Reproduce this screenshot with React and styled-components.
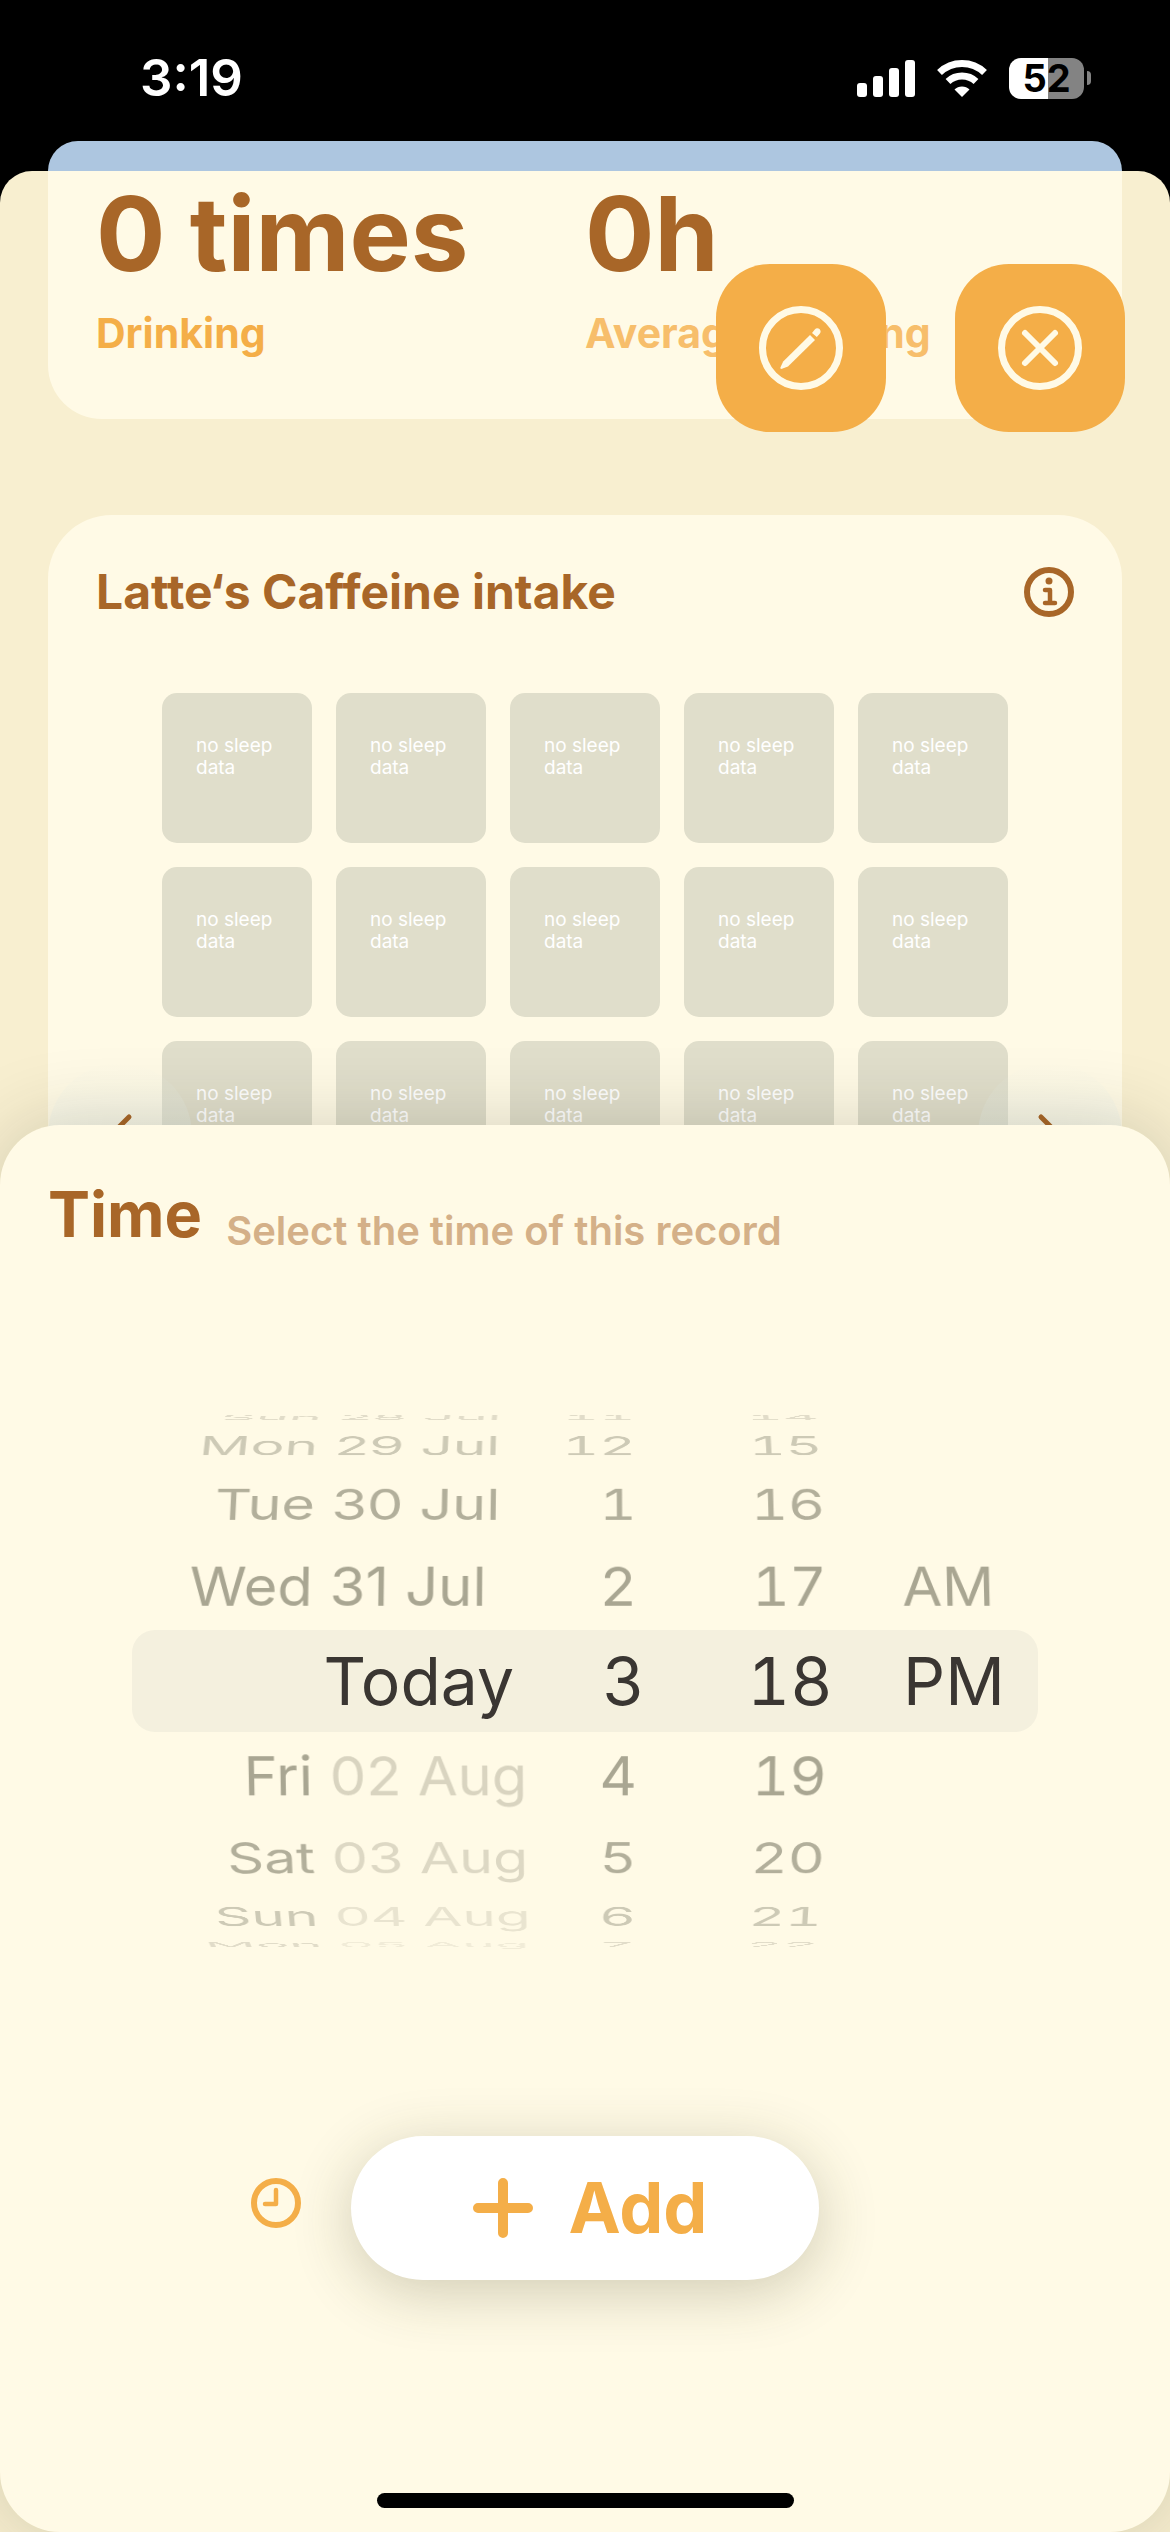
import styled, { createGlobalStyle } from 'styled-components'

export default function App() {
    return <Screen>
        <GlobalStyle />
        <StatusBar>
            <Clock>3:19</Clock>
            <StatusIcons>
                <SignalIcon />
                <WifiIcon />
                <Battery><Level>52</Level></Battery>
            </StatusIcons>
        </StatusBar>
        <BackCard />
        <Page>
            <StatsCard>
                {stats.map(value => {
                    return <div key={value.label}>
                        <StatValue>{value.value}</StatValue>
                        <StatLabel $faded={value.faded}>{value.label}</StatLabel>
                    </div>
                })}
            </StatsCard>
            <IntakeCard>
                <CardHeader>
                    <CardTitle>Latte‘s Caffeine intake</CardTitle>
                    <button aria-label='About caffeine intake'><InfoIcon /></button>
                </CardHeader>
                <Tiles>
                    {Array.from({ length: 15 }, (_, i) => <Tile key={i}>no sleep<br />data</Tile>)}
                </Tiles>
                <PrevButton aria-label='Previous'><Chevron d='M26 6 8 24l18 18' /></PrevButton>
                <NextButton aria-label='Next'><Chevron d='M8 6l18 18L8 42' /></NextButton>
            </IntakeCard>
        </Page>
        <FloatingActions>
            <ActionButton aria-label='Edit'><EditIcon /></ActionButton>
            <ActionButton aria-label='Close'><CloseIcon /></ActionButton>
        </FloatingActions>
        <Sheet>
            <SheetHeader>
                <SheetTitle>Time</SheetTitle>
                <SheetHint>Select the time of this record</SheetHint>
            </SheetHeader>
            <Picker>
                <SelectedBar />
                <Wheels>
                    <Wheel role='listbox' aria-label='Date'>
                        {dates.map(([day, date, future], i) => {
                            const row = i - 4
                            if (row === 0) return <Option key={day} $row={0} $align='flex-end' role='option' aria-selected>{day}</Option>
                            return <Option key={day + date} $row={row} role='option' aria-selected={false}>
                                <Weekday>{day}</Weekday>
                                <MonthDay $future={future}>{date}</MonthDay>
                            </Option>
                        })}
                    </Wheel>
                    <NumberWheel role='listbox' aria-label='Hour'>
                        {hours.map((value, i) => <Option key={value} $row={i - 4} $align='flex-end' $inset={i === 4 ? 0 : 8} role='option' aria-selected={i === 4}>{value}</Option>)}
                    </NumberWheel>
                    <NumberWheel $lead={32} role='listbox' aria-label='Minute'>
                        {minutes.map((value, i) => <Option key={value} $row={i - 4} $align='center' role='option' aria-selected={i === 4}>{value}</Option>)}
                    </NumberWheel>
                    <Wheel role='listbox' aria-label='AM or PM'>
                        {['AM', 'PM'].map((value, i) => <Option key={value} $row={i - 1} role='option' aria-selected={i === 1}>{value}</Option>)}
                    </Wheel>
                </Wheels>
            </Picker>
            <SheetActions>
                <NowButton aria-label='Use current time'><ClockIcon /></NowButton>
                <AddButton><PlusIcon />Add</AddButton>
            </SheetActions>
            <HomeIndicator />
        </Sheet>
    </Screen>
}

const stats = [
    { value: '0 times', label: 'Drinking' },
    { value: '0h', label: 'Average Drinking', faded: true }
]

const dates = [
    ['Sun', '28 Jul'], ['Mon', '29 Jul'], ['Tue', '30 Jul'], ['Wed', '31 Jul'],
    ['Today'],
    ['Fri', '02 Aug', true], ['Sat', '03 Aug', true], ['Sun', '04 Aug', true], ['Mon', '05 Aug', true]
]
const hours = [11, 12, 1, 2, 3, 4, 5, 6, 7]
const minutes = [14, 15, 16, 17, 18, 19, 20, 21, 22]

// picker drum: rows sit 20deg apart on a cylinder
const RADIUS = 278
const STEP = 20
const fade = [1, 0.9, 0.8, 0.52, 0.32]

const SignalIcon = () => <svg width='58' height='38' fill='#fff' aria-hidden='true'>
    <rect y='24' width='10' height='14' rx='3' />
    <rect x='16' y='17' width='10' height='21' rx='3' />
    <rect x='32' y='9' width='10' height='29' rx='3' />
    <rect x='48' y='1' width='10' height='37' rx='3' />
</svg>

const WifiIcon = () => <svg width='50' height='38' viewBox='0 0 50 38' fill='none' stroke='#fff' strokeWidth='7' aria-hidden='true'>
    <path d='M2.500 13.500C8.500 7.800 16.400 4.500 25 4.500s16.500 3.300 22.500 9' />
    <path d='M11 22.500c3.700-3.500 8.600-5.500 14-5.500s10.300 2 14 5.500' />
    <path d='M17.500 30.500c2-1.900 4.600-3 7.500-3s5.500 1.100 7.500 3L25 38z' fill='#fff' stroke='none' />
</svg>

const InfoIcon = () => <svg width='50' height='50' viewBox='0 0 50 50' fill='none' stroke='#a86628' aria-hidden='true'>
    <circle cx='25' cy='25' r='22' strokeWidth='6' />
    <circle cx='25' cy='14' r='3.500' fill='#a86628' stroke='none' />
    <path d='M21 23h5v13M21 36h10' strokeWidth='4.500' strokeLinecap='round' strokeLinejoin='round' />
</svg>

const EditIcon = () => <svg width='84' height='84' viewBox='0 0 84 84' fill='#fffae6' aria-hidden='true'>
    <circle cx='42' cy='42' r='38.500' fill='none' stroke='#fffae6' strokeWidth='7' />
    <path d='M51 29l5 5-27 26.500-6 2.300c-1.200.4-2-.4-1.500-1.500l2.700-5.800z' />
    <path d='M53 27l2.800-3.500c1.300-1.700 3.300-1.800 4.700-.4s1.600 3.400 0 4.900L57.800 31z' />
</svg>

const CloseIcon = () => <svg width='84' height='84' viewBox='0 0 84 84' fill='none' stroke='#fffae6' aria-hidden='true'>
    <circle cx='42' cy='42' r='38.500' strokeWidth='7' />
    <path d='M27 27l30 30M57 27L27 57' strokeWidth='6' strokeLinecap='round' />
</svg>

const Chevron = ({ d }) => <svg width='34' height='48' viewBox='0 0 34 48' fill='none' stroke='#a86628' strokeWidth='5' strokeLinecap='round' strokeLinejoin='round' aria-hidden='true'>
    <path d={d} />
</svg>

const ClockIcon = () => <svg width='50' height='50' viewBox='0 0 50 50' fill='none' stroke='#f4ae48' aria-hidden='true'>
    <circle cx='25' cy='25' r='22' strokeWidth='6' />
    <path d='M25 12v14H14' strokeWidth='4.500' strokeLinecap='round' strokeLinejoin='round' />
</svg>

const PlusIcon = () => <svg width='60' height='60' viewBox='0 0 60 60' stroke='#f4ae48' strokeWidth='10' strokeLinecap='round' aria-hidden='true'>
    <path d='M30 5v50M5 30h50' />
</svg>

const GlobalStyle = createGlobalStyle`
    * { box-sizing: border-box; }
    body {
        margin: 0;
        background: #000;
        font-family: Inter, "Liberation Sans", sans-serif;
    }
    h1, h2, p { margin: 0; }
    button {
        padding: 0;
        border: 0;
        background: none;
        font: inherit;
        color: inherit;
    }
    svg { display: block; flex: none; }
`;

const Screen = styled.div`
    position: relative;
    display: flex;
    flex-direction: column;
    height: 100vh;
    overflow: hidden;
    background: #000;
`;

const StatusBar = styled.header`
    display: flex;
    justify-content: space-between;
    align-items: center;
    padding: 46px 79px 31px 140px;
    color: #fff;
`;

const Clock = styled.div`
    font-size: 51px;
    line-height: 64px;
    font-weight: 600;
`;

const StatusIcons = styled.div`
    display: flex;
    align-items: center;
    gap: 22px;
`;

const Battery = styled.div`
    display: flex;
    align-items: center;
    gap: 3px;

    &::after {
        content: '';
        width: 4px;
        height: 14px;
        border-radius: 0 4px 4px 0;
        background: #838383;
    }
`;

const Level = styled.div`
    width: 75px;
    border-radius: 12px;
    background: linear-gradient(to right, #fff 52%, #838383 52%);
    color: #000;
    font-size: 38px;
    line-height: 41px;
    font-weight: 700;
    text-align: center;
`;

const BackCard = styled.div`
    flex: none;
    height: 30px;
    margin: 0 48px;
    border-radius: 30px 30px 0 0;
    background: #adc6e0;
`;

const Page = styled.main`
    flex: 1;
    min-height: 0;
    padding: 0 48px;
    border-radius: 32px 32px 0 0;
    background: #f8efd0;
    overflow: hidden;
`;

const StatsCard = styled.section`
    display: grid;
    grid-template-columns: 1fr 1fr;
    padding: 0 48px 61px;
    border-radius: 0 0 54px 54px;
    background: #fffae6;
    white-space: nowrap;
`;

const StatValue = styled.div`
    color: #a86628;
    font-size: 103px;
    line-height: 126px;
    font-weight: 700;
`;

const StatLabel = styled.div`
    margin-top: 11px;
    color: ${props => props.$faded ? '#f7be6b' : '#f4ae48'};
    font-size: 41px;
    line-height: 50px;
    font-weight: 700;
`;

const IntakeCard = styled.section`
    position: relative;
    margin-top: 96px;
    padding: 47px 48px;
    border-radius: 64px;
    background: #fffae6;
`;

const CardHeader = styled.div`
    display: flex;
    justify-content: space-between;
    align-items: center;
    height: 60px;
`;

const CardTitle = styled.h2`
    color: #a86628;
    font-size: 48px;
    line-height: 60px;
    font-weight: 700;
`;

const Tiles = styled.div`
    display: grid;
    grid-template-columns: repeat(5, 150px);
    justify-content: center;
    gap: 24px;
    margin-top: 71px;
`;

const Tile = styled.div`
    height: 150px;
    padding: 42px 0 0 34px;
    border-radius: 15px;
    background: #e0decb;
    color: #fff;
    font-size: 19px;
    line-height: 22px;
`;

const PageButton = styled.button`
    position: absolute;
    top: 548px;
    display: flex;
    align-items: center;
    justify-content: center;
    width: 144px;
    height: 144px;
    border-radius: 50%;
    background: linear-gradient(rgba(232, 240, 234, 0), rgba(232, 240, 234, 0.8));
`;

const PrevButton = styled(PageButton)`
    left: 0;
`;

const NextButton = styled(PageButton)`
    right: 0;
`;

const FloatingActions = styled.div`
    position: absolute;
    top: 264px;
    right: 45px;
    display: flex;
    gap: 69px;
`;

const ActionButton = styled.button`
    display: flex;
    align-items: center;
    justify-content: center;
    width: 170px;
    height: 168px;
    border-radius: 54px;
    background: #f4ae48;
`;

const Sheet = styled.section`
    position: absolute;
    left: 0;
    right: 0;
    bottom: 0;
    display: flex;
    flex-direction: column;
    padding: 53px 48px 24px;
    border-radius: 60px;
    background: #fffae6;
    box-shadow: 0 0 80px rgba(40, 40, 20, 0.2);
`;

const SheetHeader = styled.div`
    display: flex;
    align-items: flex-end;
    gap: 24px;
`;

const SheetTitle = styled.h1`
    color: #a86628;
    font-size: 63px;
    line-height: 72px;
    font-weight: 700;
`;

const SheetHint = styled.p`
    color: #d4b088;
    font-size: 40px;
    line-height: 38px;
    font-weight: 600;
`;

const Picker = styled.div`
    display: grid;
    align-items: center;
    align-self: center;
    width: 100%;
    max-width: 906px;
    height: 560px;
    margin-top: 151px;
`;

const SelectedBar = styled.div`
    grid-area: 1 / 1;
    height: 102px;
    border-radius: 23px;
    background: #f4f0de;
`;

const Wheels = styled.div`
    grid-area: 1 / 1;
    display: grid;
    grid-template-columns: 382fr 131fr 258fr 135fr;
    perspective: 6000px;
`;

const Wheel = styled.div`
    display: grid;
    align-items: center;
    padding-left: ${props => props.$lead || 0}px;
    transform-style: preserve-3d;
    transform: translateZ(-${RADIUS}px);
`;

const NumberWheel = styled(Wheel)`
    font-variant-numeric: tabular-nums;
`;

const Option = styled.button`
    grid-area: 1 / 1;
    display: flex;
    justify-content: ${props => props.$align || 'flex-start'};
    gap: 17px;
    min-width: 0;
    padding-right: ${props => props.$inset || 0}px;
    color: ${props => props.$row === 0 ? '#3a3632' : '#9f9c88'};
    font-size: ${props => props.$row === 0 ? 66 : 58}px;
    font-variant-numeric: inherit;
    line-height: 88px;
    white-space: nowrap;
    opacity: ${props => fade[Math.abs(props.$row)]};
    transform: rotateX(${props => -props.$row * STEP}deg) translateZ(${RADIUS}px);
`;

const Weekday = styled.span`
    flex: none;
    width: 180px;
    text-align: right;
`;

const MonthDay = styled.span`
    opacity: ${props => props.$future ? 0.45 : 1};
`;

const SheetActions = styled.div`
    display: grid;
    grid-template-columns: 1fr auto 1fr;
    align-items: center;
    margin-top: 175px;
`;

const NowButton = styled.button`
    justify-self: end;
    margin-right: 50px;
    padding-bottom: 10px;
`;

const AddButton = styled.button`
    display: flex;
    align-items: center;
    justify-content: center;
    gap: 36px;
    width: 468px;
    height: 144px;
    padding-left: 10px;
    border-radius: 72px;
    background: #fff;
    box-shadow: 0 12px 60px rgba(60, 60, 20, 0.24);
    color: #f4ae48;
    font-size: 70px;
    line-height: 80px;
    font-weight: 700;
`;

const HomeIndicator = styled.div`
    align-self: center;
    width: 417px;
    height: 15px;
    margin-top: 213px;
    border-radius: 8px;
    background: #000;
`;
